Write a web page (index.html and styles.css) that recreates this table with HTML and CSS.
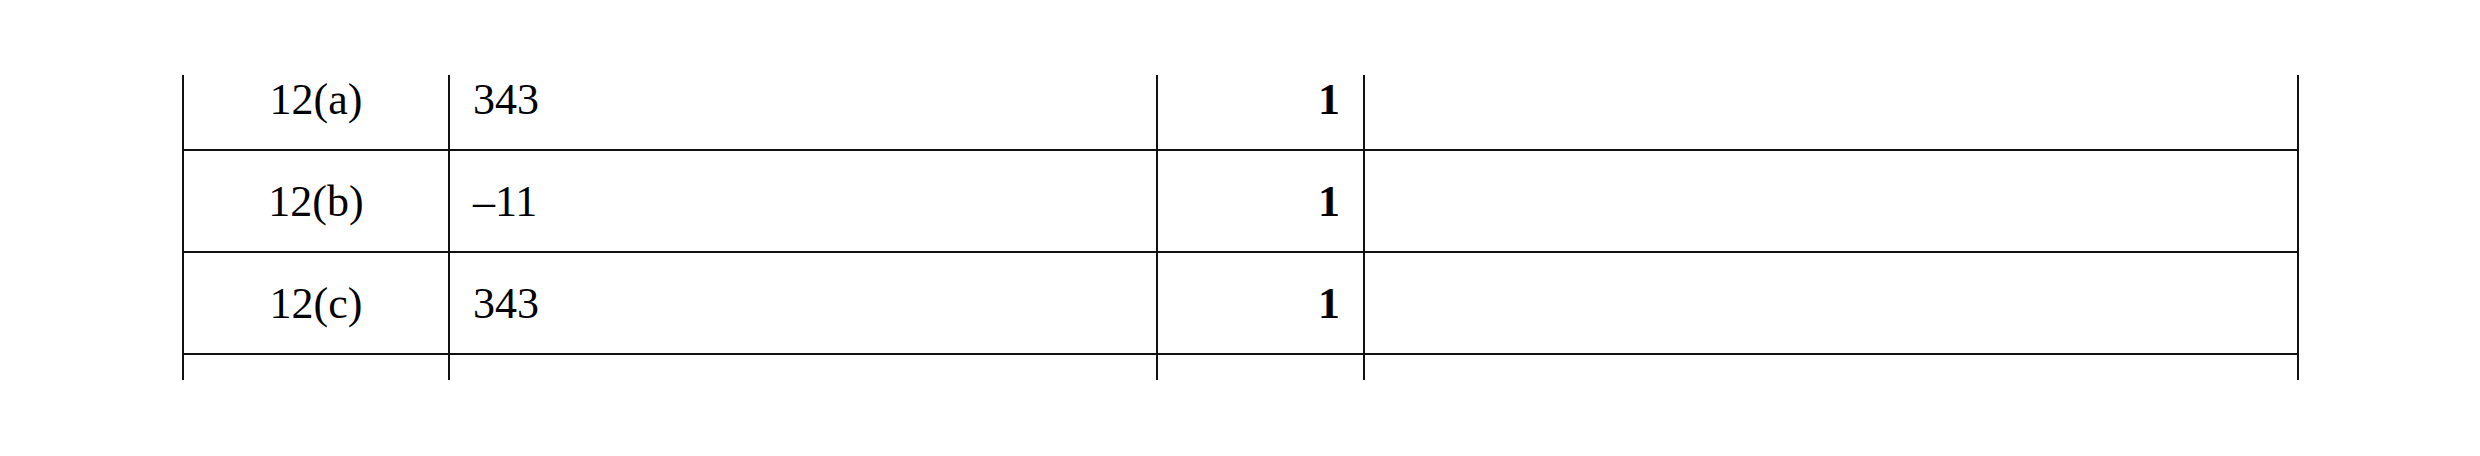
FILE: index.html
```html
<!DOCTYPE html>
<html lang="en">
<head>
<meta charset="utf-8">
<title>Marks table</title>
<link rel="stylesheet" href="styles.css">
</head>
<body>
<div class="viewport">
  <div class="table">
    <div class="row">
      <div class="cell q">12(a)</div>
      <div class="cell ans">343</div>
      <div class="cell mark">1</div>
      <div class="cell notes last"></div>
    </div>
    <div class="row">
      <div class="cell q">12(b)</div>
      <div class="cell ans">–11</div>
      <div class="cell mark">1</div>
      <div class="cell notes last"></div>
    </div>
    <div class="row">
      <div class="cell q">12(c)</div>
      <div class="cell ans">343</div>
      <div class="cell mark">1</div>
      <div class="cell notes last"></div>
    </div>
    <div class="row">
      <div class="cell q"></div>
      <div class="cell ans"></div>
      <div class="cell mark"></div>
      <div class="cell notes last"></div>
    </div>
  </div>
</div>
</body>
</html>
```
FILE: styles.css
```css
html, body {
  margin: 0;
  padding: 0;
  background: #ffffff;
}

body {
  font-family: "Liberation Serif", "Times New Roman", serif;
  font-size: 44px;
  color: #000000;
}

.viewport {
  margin-top: 75px;
  margin-left: 182px;
  width: 2117px;
  height: 305px;
  overflow: hidden;
}

.table {
  margin-top: -26px;
}

.row {
  display: grid;
  grid-template-columns: 266px 708px 207px 936px;
  height: 102px;
}

.cell {
  box-sizing: border-box;
  border-left: 2px solid #111111;
  border-bottom: 2px solid #111111;
  display: flex;
  align-items: center;
  padding: 0 23px;
  white-space: nowrap;
}

.cell.last {
  border-right: 2px solid #111111;
}

.q {
  justify-content: center;
  padding: 0;
}

.ans {
  justify-content: flex-start;
}

.mark {
  justify-content: flex-end;
  font-weight: bold;
}
```
